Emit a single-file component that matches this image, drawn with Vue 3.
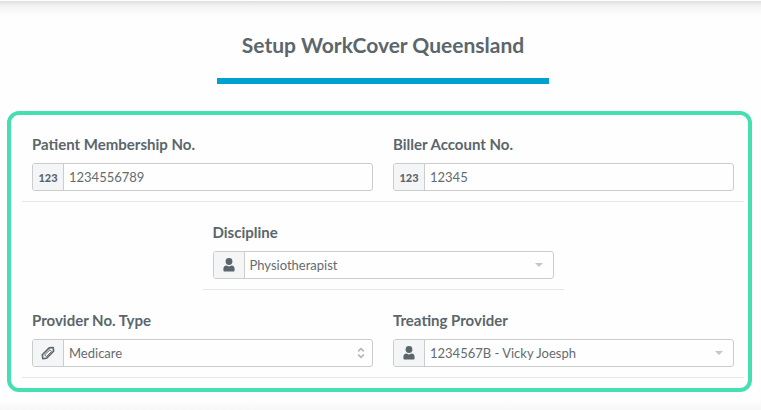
<template>
  <main class="setup-page">
    <header class="setup-header">
      <h1 class="setup-title">Setup WorkCover Queensland</h1>
    </header>

    <form class="setup-form" @submit.prevent>
      <div v-for="(row, index) in rows" :key="index" class="form-row" :class="{ 'form-row-single': row.length === 1 }">
        <div v-for="field in row" :key="field.id" class="form-field">
          <label :for="field.id" class="field-label">{{ field.label }}</label>
          <div class="input-group">
            <span class="input-addon" aria-hidden="true">
              <span v-if="field.icon === 'number'" class="addon-number">123</span>
              <svg v-else-if="field.icon === 'user'" class="addon-user" viewBox="0 0 12 14">
                <circle cx="6" cy="3.5" r="3.4" />
                <path d="M3.4 7.6C1.5 7.7.4 9.1.4 11v1.2c0 .8.5 1.3 1.3 1.3h8.6c.8 0 1.3-.5 1.3-1.3V11c0-1.9-1.1-3.3-3-3.4-.8.5-1.6.8-2.6.8s-1.8-.3-2.6-.8z" />
              </svg>
              <svg v-else class="addon-ticket" viewBox="0 0 14 14">
                <path d="M1.3 8.7 8.2 1.9 12.2 1.5 12.6 5.2 5.6 12.2 1.8 12.6z" />
                <path d="M3.7 8.9 8.9 3.8M5.5 10.6l5.1-5.1M3.7 8.9l1.8 1.7M8.9 3.8l1.7 1.7" />
              </svg>
            </span>
            <input v-if="field.type === 'text'" :id="field.id" v-model="values[field.id]" class="field-control" type="text" />
            <template v-else>
              <select :id="field.id" v-model="values[field.id]" class="field-control field-select">
                <option v-for="option in field.options" :key="option" :value="option">{{ option }}</option>
              </select>
              <svg v-if="field.arrows" class="select-icon select-arrows" viewBox="0 0 8 12" aria-hidden="true">
                <path d="M1.2 4.4 4 1.6l2.8 2.8M1.2 7.6 4 10.4l2.8-2.8" />
              </svg>
              <svg v-else class="select-icon select-caret" viewBox="0 0 8 4" aria-hidden="true">
                <path d="M0 0h8L4 4z" />
              </svg>
            </template>
          </div>
        </div>
      </div>
    </form>
    <div class="page-bottom"></div>
  </main>
</template>

<script setup>
import { reactive } from 'vue'

const rows = [
  [
    { id: 'membership', label: 'Patient Membership No.', icon: 'number', type: 'text' },
    { id: 'account', label: 'Biller Account No.', icon: 'number', type: 'text' }
  ],
  [
    { id: 'discipline', label: 'Discipline', icon: 'user', type: 'select', options: ['Physiotherapist'] }
  ],
  [
    { id: 'numberType', label: 'Provider No. Type', icon: 'ticket', type: 'select', arrows: true, options: ['Medicare'] },
    { id: 'provider', label: 'Treating Provider', icon: 'user', type: 'select', options: ['1234567B - Vicky Joesph'] }
  ]
]

const values = reactive({
  membership: '1234556789',
  account: '12345',
  discipline: 'Physiotherapist',
  numberType: 'Medicare',
  provider: '1234567B - Vicky Joesph'
})
</script>

<style>
body {
  background: #fefefe;
}
</style>

<style scoped>
.setup-page,
.setup-page * {
  box-sizing: border-box;
}

.setup-page {
  display: flex;
  flex-direction: column;
  min-height: 100vh;
  font-family: Lato, "Open Sans", sans-serif;
  color: #5b666c;
  background: linear-gradient(#fefefe 1px, #dfdfdf 1px, #f3f3f3 6px, #fefefe 16px);
}

/* Heading */
.setup-header {
  display: flex;
  justify-content: center;
  padding: 30px 0 27px 5px;
}

.setup-title {
  width: 44%;
  min-width: 300px;
  margin: 0;
  padding-bottom: 18px;
  border-bottom: 6px solid #00a0d0;
  font-size: 21px;
  line-height: 30px;
  font-weight: 700;
  text-align: center;
}

/* Form */
.setup-form {
  display: flex;
  flex-direction: column;
  gap: 1px;
  margin: 0 9px 0 7px;
  padding: 0 4px 10px 11px;
  border: 4px solid #46dfb1;
  border-radius: 12px;
}

.form-row {
  display: grid;
  grid-template-columns: 1fr 1fr;
  border-bottom: 1px solid #e6e6e6;
}

.form-row-single {
  grid-template-columns: 1fr;
  width: 50%;
  align-self: center;
}

.form-field {
  min-width: 0;
  padding: 19px 10px 10px;
}

.field-label {
  display: block;
  margin-bottom: 9px;
  font-size: 15px;
  line-height: 20px;
  font-weight: 700;
}

.input-group {
  position: relative;
  display: flex;
  height: 28px;
  border: 1px solid #cbcdcd;
  border-radius: 3px;
  background: #fefefe;
  overflow: hidden;
}

.input-group:focus-within {
  border-color: #00a0d0;
}

.input-addon {
  display: flex;
  flex: none;
  align-items: center;
  justify-content: center;
  width: 31px;
  border-right: 1px solid #cbcdcd;
  background: #f4f5f7;
}

.addon-number {
  font-family: "Liberation Sans Narrow", Lato, sans-serif;
  font-size: 11px;
  font-weight: 900;
}

.addon-user {
  width: 12px;
  height: 14px;
  fill: #5b666c;
}

.addon-ticket {
  width: 14px;
  height: 14px;
  fill: none;
  stroke: #5b666c;
  stroke-width: 1.6;
  stroke-linejoin: round;
}

.addon-ticket path + path {
  stroke-width: 1;
}

.field-control {
  flex: 1;
  min-width: 0;
  margin: 0;
  padding: 0 5px;
  border: 0;
  outline: 0;
  background: transparent;
  color: #646b6f;
  font-family: inherit;
  font-size: 13px;
}

.field-select {
  appearance: none;
  padding-right: 26px;
}

.select-icon {
  position: absolute;
  top: 50%;
  transform: translateY(-50%);
  pointer-events: none;
}

.select-arrows {
  right: 7px;
  width: 8px;
  height: 12px;
  fill: none;
  stroke: #b4b6b7;
  stroke-width: 1.6;
}

.select-caret {
  right: 10px;
  width: 8px;
  height: 4px;
  fill: #c6c6c6;
}

.page-bottom {
  flex: 1;
  min-height: 18px;
  background: linear-gradient(#fefefe 40%, #f7f7f7);
}
</style>
